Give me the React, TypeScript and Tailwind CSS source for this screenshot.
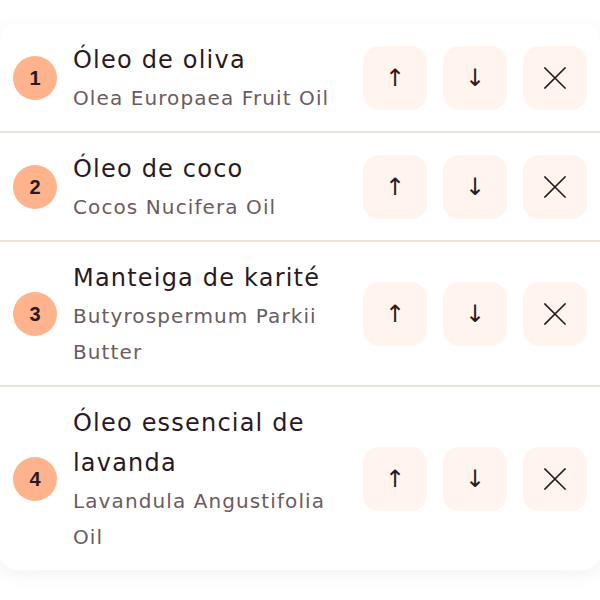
const ingredients = [
  { id: 1, name: "Óleo de oliva", inci: "Olea Europaea Fruit Oil" },
  { id: 2, name: "Óleo de coco", inci: "Cocos Nucifera Oil" },
  { id: 3, name: "Manteiga de karité", inci: "Butyrospermum Parkii Butter" },
  { id: 4, name: "Óleo essencial de lavanda", inci: "Lavandula Angustifolia Oil" },
];

function CloseIcon() {
  return (
    <svg width="22" height="22" viewBox="0 0 22 22" fill="none" stroke="currentColor" strokeWidth="1.6" strokeLinecap="square">
      <path d="M1 1 21 21M21 1 1 21" />
    </svg>
  );
}

function ActionButton({ label, children }: { label: string; children: React.ReactNode }) {
  return (
    <button
      type="button"
      aria-label={label}
      className="flex h-16 w-16 shrink-0 items-center justify-center rounded-2xl bg-[#fff4ee] text-[24px] text-[#2a1a1f] [font-family:'DejaVu_Sans',sans-serif]"
    >
      {children}
    </button>
  );
}

export default function App() {
  return (
    <div className="min-h-screen bg-white pt-6 [font-family:'DejaVu_Sans',sans-serif]">
      <ul className="overflow-hidden rounded-2xl bg-white shadow-[0_4px_20px_rgba(0,0,0,0.06)]">
        {ingredients.map((item, i) => (
          <li
            key={item.id}
            className={`flex items-center gap-4 pt-4 pb-[15px] pl-[13px] pr-[13px] ${i < ingredients.length - 1 ? "border-b-2 border-[#ede2da]" : ""}`}
          >
            <span className="flex h-11 w-11 shrink-0 items-center justify-center rounded-full bg-[#ffb38c] text-[20px] font-bold text-[#2a1a1f] [font-family:'Liberation_Sans',sans-serif]">
              {item.id}
            </span>
            <div className="min-w-0 flex-1">
              <p className="text-[24px] leading-[40px] tracking-[0.05em] text-[#2a1a1f]">{item.name}</p>
              <p className="text-[20px] leading-[36px] tracking-[0.055em] text-[#6b5b5f]">{item.inci}</p>
            </div>
            <div className="flex shrink-0 gap-4">
              <ActionButton label="Mover para cima">↑</ActionButton>
              <ActionButton label="Mover para baixo">↓</ActionButton>
              <ActionButton label="Remover">
                <CloseIcon />
              </ActionButton>
            </div>
          </li>
        ))}
      </ul>
    </div>
  );
}
